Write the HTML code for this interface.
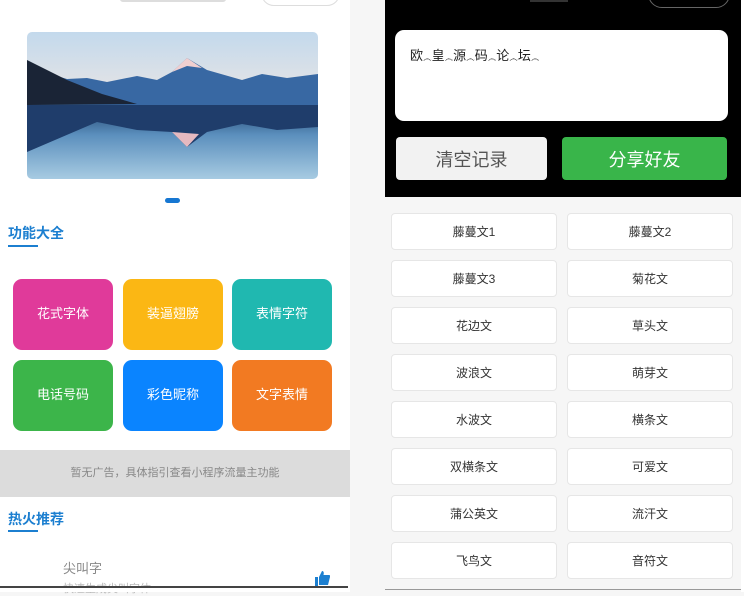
<!DOCTYPE html>
<html><head><meta charset="utf-8"><style>
*{margin:0;padding:0;box-sizing:border-box}
body{width:744px;height:592px;overflow:hidden;background:#f6f6f6;font-family:"Liberation Sans","Noto Sans CJK SC",sans-serif;position:relative}
.a{position:absolute}
.tile{position:absolute;width:100px;height:71px;border-radius:9px;color:#fff;font-size:13px;display:flex;align-items:center;justify-content:center;padding-bottom:5px}
.gb{position:absolute;width:166px;height:37px;background:#fff;border:1px solid #e6e6e6;border-radius:4px;font-size:12px;color:#333;display:flex;align-items:center;justify-content:center}
.wv{font-size:9px;vertical-align:-1px}
</style></head><body>
<div class="a" style="left:0;top:0;width:350px;height:592px;background:#fff"></div>
<div class="a" style="left:120px;top:-8px;width:106px;height:10px;background:#ddd;border-radius:3px"></div>
<div class="a" style="left:261px;top:-20px;width:79px;height:26px;border:1px solid #ddd;border-radius:13px"></div>
<svg class="a" style="left:27px;top:32px;border-radius:5px" width="291" height="147" viewBox="0 0 291 147">
<defs><linearGradient id="s" x1="0" y1="0" x2="0" y2="1"><stop offset="0" stop-color="#c3d9ec"/><stop offset="1" stop-color="#ece6e4"/></linearGradient>
<linearGradient id="w" x1="0" y1="0" x2="0" y2="1"><stop offset="0" stop-color="#1d3f6a"/><stop offset=".4" stop-color="#5b8fbd"/><stop offset="1" stop-color="#a7cbe2"/></linearGradient></defs>
<rect width="291" height="75" fill="url(#s)"/>
<rect y="73" width="291" height="74" fill="url(#w)"/>
<path d="M0 35 L40 47 L60 46 L80 50 L110 44 L130 48 L145 40 L160 26 L180 38 L215 48 L235 42 L260 46 L291 42 L291 73 L0 73Z" fill="#3868a3"/>
<path d="M145 40 L160 26 L175 36 L160 34Z" fill="#f0cfd0"/>
<path d="M0 28 L40 48 L75 62 L110 72 L0 73Z" fill="#1a2436"/>
<path d="M0 73 L291 73 L291 95 L250 98 L215 92 L180 100 L160 115 L145 100 L110 98 L70 90 L0 120Z" fill="#1f3d6b"/>
<path d="M145 100 L160 115 L172 102Z" fill="#e5b9c0"/>
</svg>
<div class="a" style="left:165px;top:198px;width:15px;height:5px;border-radius:3px;background:#1677d2"></div>
<div class="a" style="left:8px;top:223px;font-size:14px;font-weight:bold;color:#1c7fd0">功能大全</div>
<div class="a" style="left:8px;top:245px;width:30px;height:2px;background:#1c7fd0"></div>
<div class="tile" style="left:13px;top:279px;background:#e03a9a">花式字体</div>
<div class="tile" style="left:123px;top:279px;background:#fbb714">装逼翅膀</div>
<div class="tile" style="left:232px;top:279px;background:#20b8b0">表情字符</div>
<div class="tile" style="left:13px;top:360px;background:#3cb54a">电话号码</div>
<div class="tile" style="left:123px;top:360px;background:#0a84ff">彩色昵称</div>
<div class="tile" style="left:232px;top:360px;background:#f27a22">文字表情</div>
<div class="a" style="left:0;top:450px;width:350px;height:47px;background:#dcdcdc;color:#888;font-size:11px;text-align:center;line-height:47px">暂无广告，具体指引查看小程序流量主功能</div>
<div class="a" style="left:8px;top:509px;font-size:14px;font-weight:bold;color:#1c7fd0">热火推荐</div>
<div class="a" style="left:8px;top:530px;width:30px;height:2px;background:#1c7fd0"></div>
<div class="a" style="left:63px;top:558px;font-size:13px;color:#888">尖叫字</div>
<div class="a" style="left:63px;top:580px;font-size:11px;color:#bbb">快速生成尖叫字体</div>
<svg class="a" style="left:314px;top:570px" width="16" height="16" viewBox="0 0 16 16"><path d="M1 7h3v9H1zM5 7l3-6c2 0 2 2 1.5 4H15c1 0 1.5 1 1 2l-2 8H5z" fill="#1c7fd0"/></svg>
<div class="a" style="left:0;top:586px;width:348px;height:6px;background:#fff;border-top:2px solid #444"></div>
<div class="a" style="left:385px;top:0;width:359px;height:197px;background:#000"></div>
<div class="a" style="left:530px;top:-8px;width:38px;height:10px;background:#333"></div>
<div class="a" style="left:648px;top:-20px;width:82px;height:28px;border:1px solid #666;border-radius:14px"></div>
<div class="a" style="left:395px;top:30px;width:333px;height:91px;background:#fff;border-radius:9px"></div>
<div class="a" style="left:410px;top:45px;font-size:13px;color:#222">欧<span class="wv">෴</span>皇<span class="wv">෴</span>源<span class="wv">෴</span>码<span class="wv">෴</span>论<span class="wv">෴</span>坛<span class="wv">෴</span></div>
<div class="a" style="left:396px;top:137px;width:151px;height:43px;background:#f2f2f2;border-radius:4px;color:#555;font-size:18px;display:flex;align-items:center;justify-content:center">清空记录</div>
<div class="a" style="left:562px;top:137px;width:165px;height:43px;background:#39b54a;border-radius:4px;color:#fff;font-size:18px;display:flex;align-items:center;justify-content:center">分享好友</div>
<div class="gb" style="left:391px;top:213px">藤蔓文1</div><div class="gb" style="left:567px;top:213px">藤蔓文2</div>
<div class="gb" style="left:391px;top:260px">藤蔓文3</div><div class="gb" style="left:567px;top:260px">菊花文</div>
<div class="gb" style="left:391px;top:307px">花边文</div><div class="gb" style="left:567px;top:307px">草头文</div>
<div class="gb" style="left:391px;top:354px">波浪文</div><div class="gb" style="left:567px;top:354px">萌芽文</div>
<div class="gb" style="left:391px;top:401px">水波文</div><div class="gb" style="left:567px;top:401px">横条文</div>
<div class="gb" style="left:391px;top:448px">双横条文</div><div class="gb" style="left:567px;top:448px">可爱文</div>
<div class="gb" style="left:391px;top:495px">蒲公英文</div><div class="gb" style="left:567px;top:495px">流汗文</div>
<div class="gb" style="left:391px;top:542px">飞鸟文</div><div class="gb" style="left:567px;top:542px">音符文</div>
<div class="a" style="left:741px;top:0;width:3px;height:592px;background:#fff"></div>
<div class="a" style="left:385px;top:589px;width:356px;height:1px;background:#999"></div>
</body></html>
